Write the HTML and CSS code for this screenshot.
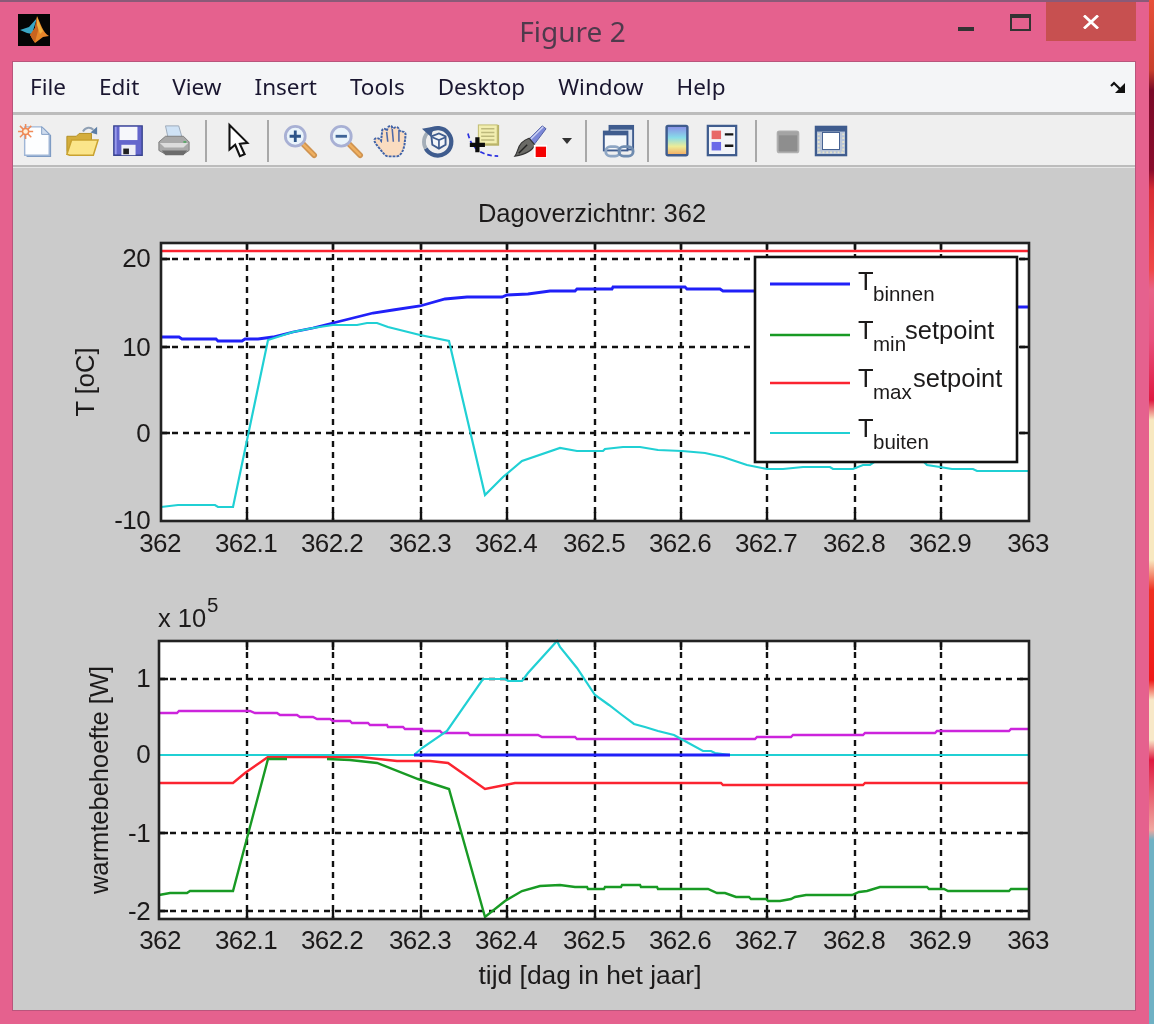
FILE: index.html
```html
<!DOCTYPE html>
<html lang="nl">
<head>
<meta charset="utf-8">
<title>Figure 2</title>
<link rel="stylesheet" href="styles.css">
</head>
<body>
<div class="window">
  <header class="titlebar">
    <div class="title-left">
      <svg class="app-icon" viewBox="0 0 32 32">
        <rect width="32" height="32" fill="#050505"/>
        <path d="M2 16 L11 13 L19 4 L14 20 L9 19Z" fill="#3aa6c4"/>
        <path d="M19 2 C22 8 25 19 31 22 L25 23 L17 29 C14 25 13 22 12 21 L17 14Z" fill="#e8872a"/>
        <path d="M19 3 L21 13 L17 28 C14 25 13 22 12 21 L17 14Z" fill="#c9641f"/>
        <path d="M19 3 C21 8 23 14 25 17 L22 20 L19 11Z" fill="#f0b040"/>
      </svg>
    </div>
    <div class="title-text">Figure 2</div>
    <div class="caption">
      <span class="cap-btn cap-min"><i class="min-bar"></i></span>
      <span class="cap-btn cap-max"><i class="max-box"></i></span>
      <span class="cap-btn cap-close">
        <svg viewBox="0 0 16 14" class="close-x"><path d="M1 0.5 L15 13.5 M15 0.5 L1 13.5" /></svg>
      </span>
    </div>
  </header>

  <main class="client">
    <nav class="menubar">
      <span class="menu-item">File</span>
      <span class="menu-item">Edit</span>
      <span class="menu-item">View</span>
      <span class="menu-item">Insert</span>
      <span class="menu-item">Tools</span>
      <span class="menu-item">Desktop</span>
      <span class="menu-item">Window</span>
      <span class="menu-item">Help</span>
      <svg class="dock-arrow" viewBox="0 0 16 14">
        <path d="M1 5 L4 2 L10 8" fill="none" stroke="#111" stroke-width="2.2"/>
        <path d="M15 2 V12 H5Z" fill="#111"/>
      </svg>
    </nav>

    <div class="toolbar">
      <span class="tb">
        <svg viewBox="0 0 36 36" class="ico">
          <path d="M8 4 H26 L34 12 V35 H8Z" fill="#7f9cc4"/>
          <path d="M6 3 H24 L32 11 V33 H6Z" fill="#fdfeff" stroke="#9fb6d6" stroke-width="1.5"/>
          <path d="M24 3 V11 H32Z" fill="#cfdcee" stroke="#7f9cc4"/>
          <circle cx="7" cy="8" r="4" fill="#f08a50"/>
          <path d="M7 0 V16 M-1 8 H15 M1 2 L13 14 M13 2 L1 14" stroke="#ef8a58" stroke-width="1.6"/>
          <circle cx="7" cy="8" r="2.4" fill="#fff0d8"/>
        </svg>
      </span>
      <span class="tb">
        <svg viewBox="0 0 36 36" class="ico">
          <path d="M2 13 H12 L15 10 H28 V33 H6 C4 33 2 32 2 29Z" fill="#d4ad3c" stroke="#b08c20"/>
          <path d="M2 32 L7 17 H35 L30 33 H5Z" fill="#fbe58a" stroke="#c9a230" stroke-width="1.6"/>
          <path d="M19 8 C22 3 27 3 30 6" fill="none" stroke="#8fa0b4" stroke-width="2.2"/>
          <path d="M34 3 L34 11 L27 9Z" fill="#5c7ea6"/>
        </svg>
      </span>
      <span class="tb">
        <svg viewBox="0 0 36 36" class="ico">
          <path d="M3 2 H33 V33 H3Z" fill="#6466cc" stroke="#3a4590" stroke-width="1.5"/>
          <path d="M5 3 L5 32" stroke="#9a9cec" stroke-width="2"/>
          <rect x="9" y="3" width="19" height="14" fill="#f6f7fb"/>
          <rect x="11" y="22" width="15" height="11" fill="#eeeef6"/>
          <rect x="13" y="26" width="6" height="6" fill="#222"/>
        </svg>
      </span>
      <span class="tb">
        <svg viewBox="0 0 36 36" class="ico">
          <path d="M9 2 H23 L27 16 H12Z" fill="#cfe2f5" stroke="#9aa8b8"/>
          <path d="M2 19 L9 13 H28 L34 19 V28 L28 32 H9 L2 28Z" fill="#a9a9a9" stroke="#7c7c7c"/>
          <path d="M3 20 H33 L28 25 H8Z" fill="#dcdcdc"/>
          <path d="M5 28 H32 L28 33 H9Z" fill="#6c6c6c"/>
          <path d="M28 19 H31" stroke="#5aa868" stroke-width="2"/>
        </svg>
      </span>
      <i class="sep sep-a"></i>
      <span class="tb">
        <svg viewBox="0 0 36 36" class="ico">
          <path d="M9 1 V27 L15 22 L20 34 L25 32 L20 21 L28 20Z" fill="#fff" stroke="#111" stroke-width="2.2" stroke-linejoin="miter"/>
        </svg>
      </span>
      <i class="sep"></i>
      <span class="tb">
        <svg viewBox="0 0 36 36" class="ico">
          <path d="M21 21 L33 33" stroke="#cf9350" stroke-width="6" stroke-linecap="round"/>
          <path d="M21 21 L33 33" stroke="#efb060" stroke-width="2.5" stroke-linecap="round"/>
          <circle cx="13" cy="13" r="10.5" fill="#eaf4fb" stroke="#a8b0d4" stroke-width="3"/>
          <path d="M7 13 H19 M13 7 V19" stroke="#2e5488" stroke-width="3"/>
        </svg>
      </span>
      <span class="tb">
        <svg viewBox="0 0 36 36" class="ico">
          <path d="M21 21 L33 33" stroke="#cf9350" stroke-width="6" stroke-linecap="round"/>
          <path d="M21 21 L33 33" stroke="#efb060" stroke-width="2.5" stroke-linecap="round"/>
          <circle cx="13" cy="13" r="10.5" fill="#eaf4fb" stroke="#a8b0d4" stroke-width="3"/>
          <path d="M7 13 H19" stroke="#3e6498" stroke-width="3"/>
        </svg>
      </span>
      <span class="tb">
        <svg viewBox="0 0 36 36" class="ico">
          <g transform="translate(-3 -1) scale(1.18 1.04)">
            <path d="M2 17 C3 14 6 15 8 18 L9 8 C9 5 12 5 13 8 L14 5 C15 2 18 2 18 5 L20 5 C21 3 24 4 24 7 L26 9 C28 8 30 9 30 12 L29 22 C28 28 26 33 22 34 H14 C11 33 9 29 6 25 C4 22 2 20 2 17Z" fill="#fadcc0" stroke="#3f62a8" stroke-width="1.8" stroke-dasharray="2.5 1"/>
            <path d="M13 9 L14 19 M18 6 L19 19 M24 8 L24 19" stroke="#4f6aa8" stroke-width="1.4"/>
          </g>
        </svg>
      </span>
      <span class="tb">
        <svg viewBox="0 0 36 36" class="ico">
          <path d="M8 8 A14.5 14.5 0 1 1 5 26" fill="none" stroke="#3f5c8e" stroke-width="4.5"/>
          <path d="M8 8 A14.5 14.5 0 0 0 5 26" fill="none" stroke="#a4aeb8" stroke-width="4"/>
          <path d="M1 5 L13 3 L11 14Z" fill="#3f5c8e"/>
          <path d="M11 13 L19 10 L26 13 V22 L19 26 L12 22Z" fill="#f2f5f9" stroke="#3f5c8e" stroke-width="2"/>
          <path d="M12 14 L19 17 L26 14 M19 17 V26" fill="none" stroke="#3f5c8e" stroke-width="1.8"/>
        </svg>
      </span>
      <span class="tb">
        <svg viewBox="0 0 36 36" class="ico">
          <path d="M1 10 C3 18 6 24 12 28 C18 32 25 34 33 34" fill="none" stroke="#2a30e0" stroke-width="1.8" stroke-dasharray="5 3"/>
          <rect x="12" y="1" width="22" height="22" fill="#b8b268"/>
          <rect x="12" y="1" width="20" height="20" fill="#f2eeb0" stroke="#c0bb70"/>
          <path d="M15 5 H29 M15 9 H29 M15 13 H29 M15 17 H29" stroke="#bdb97c" stroke-width="1.6"/>
          <path d="M3 22 H19 M11 14 V30" stroke="#0c0c0c" stroke-width="4.5"/>
        </svg>
      </span>
      <span class="tb">
        <svg viewBox="0 0 36 36" class="ico">
          <path d="M17 16 L31 2 L35 5 L23 21Z" fill="#7c88d8" stroke="#4c5aa0"/>
          <path d="M19 16 L32 3" stroke="#cdd4f4" stroke-width="1.5"/>
          <path d="M17 15 L23 22 C21 28 14 32 2 34 C5 30 5 24 9 20 C11 18 14 16 17 15Z" fill="#6a6a66" stroke="#333" stroke-width="1.2"/>
          <path d="M6 31 L15 22" stroke="#222" stroke-width="1.5"/>
          <rect x="22" y="22" width="14" height="14" fill="#fff"/>
          <rect x="24" y="24" width="11" height="11" fill="#f40000"/>
        </svg>
      </span>
      <span class="caret-cell"><i class="caret"></i></span>
      <i class="sep sep-b"></i>
      <span class="tb">
        <svg viewBox="0 0 36 36" class="ico">
          <rect x="9" y="2" width="25" height="25" fill="#dde5f0" stroke="#3f5c8e" stroke-width="2"/>
          <rect x="9" y="2" width="25" height="4" fill="#3f5c8e"/>
          <rect x="3" y="8" width="25" height="20" fill="#f5f7fa" stroke="#3f5c8e" stroke-width="2"/>
          <rect x="3" y="8" width="25" height="4" fill="#3f5c8e"/>
          <rect x="5" y="24" width="15" height="10" rx="5" fill="none" stroke="#8ea6c4" stroke-width="3"/>
          <rect x="19" y="24" width="15" height="10" rx="5" fill="none" stroke="#6f8cb0" stroke-width="3"/>
        </svg>
      </span>
      <i class="sep"></i>
      <span class="tb tb-narrow">
        <svg viewBox="0 0 36 36" class="ico">
          <defs>
            <linearGradient id="cbar" x1="0" y1="0" x2="0" y2="1">
              <stop offset="0" stop-color="#8a8ce8"/>
              <stop offset=".4" stop-color="#88dce8"/>
              <stop offset=".7" stop-color="#ecec98"/>
              <stop offset="1" stop-color="#f4a860"/>
            </linearGradient>
          </defs>
          <rect x="7" y="2" width="22" height="31" rx="1.5" fill="url(#cbar)" stroke="#3f5c8e" stroke-width="2.6"/>
        </svg>
      </span>
      <span class="tb tb-wide">
        <svg viewBox="0 0 36 36" class="ico">
          <rect x="3" y="2" width="30" height="31" fill="#f2f4f8" stroke="#3f5c8e" stroke-width="2.4"/>
          <rect x="7" y="7" width="10" height="9" fill="#e86868"/>
          <rect x="7" y="19" width="10" height="9" fill="#6a6ae8"/>
          <path d="M21 11 H30 M21 23 H30" stroke="#151515" stroke-width="2.6"/>
        </svg>
      </span>
      <i class="sep sep-a"></i>
      <span class="tb">
        <svg viewBox="0 0 36 36" class="ico">
          <rect x="7" y="8" width="22" height="22" rx="2" fill="#8e8e8e" stroke="#b0b0b0" stroke-width="2"/>
          <rect x="7" y="8" width="22" height="4" fill="#a4a4a4"/>
        </svg>
      </span>
      <span class="tb tb-narrow">
        <svg viewBox="0 0 36 36" class="ico">
          <rect x="2" y="3" width="32" height="30" fill="#b8c4d8" stroke="#3f5c8e" stroke-width="2.4"/>
          <rect x="2" y="3" width="32" height="5" fill="#3f5c8e"/>
          <rect x="9" y="9" width="18" height="18" fill="#fff" stroke="#3f5c8e" stroke-width="1"/>
          <path d="M5 10 V31 M31 10 V31 M5 30 H31" stroke="#e8e4c8" stroke-width="2" stroke-dasharray="2 2"/>
        </svg>
      </span>
    </div>

    <svg class="figure" viewBox="13 168 1122 842" role="img" aria-label="Dagoverzichtnr: 362">
      <text class="t c" x="592" y="222">Dagoverzichtnr: 362</text>

      <!-- Axes 1 -->
      <rect class="axes-bg" x="161" y="243" width="868" height="278"/>
      <path class="grid" d="M247 243V521M333 243V521M421 243V521M507 243V521M595 243V521M681 243V521M767 243V521M855 243V521M941 243V521M161 259H1029M161 347H1029M161 433H1029"/>
      <path class="tick" d="M247 243v9M333 243v9M421 243v9M507 243v9M595 243v9M681 243v9M767 243v9M855 243v9M941 243v9M247 521v-9M333 521v-9M421 521v-9M507 521v-9M595 521v-9M681 521v-9M767 521v-9M855 521v-9M941 521v-9M161 259h9M161 347h9M161 433h9M1029 259h-9M1029 347h-9M1029 433h-9"/>
      <polyline class="ln red" points="161,251 1029,251"/>
      <polyline class="ln blue" points="161,337 179,337 182,339 216,339 218,341 242,341 245,339 258,339 273,337 293,332 313,328 333,323 353,318 373,313 393,310 420,306 445,299 467,297 502,297 507,295 528,294 550,291 575,291 577,289 612,289 613,287 685,287 687,289 720,289 723,291 755,291 840,300 1017,307 1029,307"/>
      <polyline class="ln cyan" points="161,507 178,505 215,505 218,507 233,507 268,340 293,332 313,328 333,325 357,325 367,323 377,323 388,327 420,335 449,341 485,495 503,477 522,461 560,448 577,451 603,451 605,449 623,447 640,447 658,450 682,451 705,453 723,457 747,465 767,469 783,469 803,467 830,467 833,469 853,469 863,465 870,465 880,458 920,458 927,465 940,467 952,469 973,469 977,471 1029,471"/>
      <rect class="frame" x="161" y="243" width="868" height="278"/>

      <text class="t tk c" x="161" y="552">362</text>
      <text class="t tk c" x="247" y="552">362.1</text>
      <text class="t tk c" x="333" y="552">362.2</text>
      <text class="t tk c" x="421" y="552">362.3</text>
      <text class="t tk c" x="507" y="552">362.4</text>
      <text class="t tk c" x="595" y="552">362.5</text>
      <text class="t tk c" x="681" y="552">362.6</text>
      <text class="t tk c" x="767" y="552">362.7</text>
      <text class="t tk c" x="855" y="552">362.8</text>
      <text class="t tk c" x="941" y="552">362.9</text>
      <text class="t tk c" x="1029" y="552">363</text>
      <text class="t tk r" x="151" y="267">20</text>
      <text class="t tk r" x="151" y="356">10</text>
      <text class="t tk r" x="151" y="442">0</text>
      <text class="t tk r" x="151" y="529">-10</text>
      <text class="t c" transform="translate(94 382) rotate(-90)">T [oC]</text>

      <!-- Legend -->
      <rect class="legend" x="755" y="257" width="262" height="205"/>
      <path class="ln blue" d="M770 284H850"/>
      <path class="ln green" d="M770 335H850"/>
      <path class="ln red" d="M770 383H850"/>
      <path class="ln cyan" d="M770 433H850"/>
      <text class="t" x="858" y="290">T<tspan class="sub" x="873" y="301">binnen</tspan></text>
      <text class="t" x="858" y="339">T<tspan class="sub" x="873" y="351">min</tspan><tspan x="905" y="339">setpoint</tspan></text>
      <text class="t" x="858" y="387">T<tspan class="sub" x="873" y="399">max</tspan><tspan x="913" y="387">setpoint</tspan></text>
      <text class="t" x="858" y="437">T<tspan class="sub" x="873" y="449">buiten</tspan></text>

      <!-- Axes 2 -->
      <rect class="axes-bg" x="159" y="641" width="870" height="278"/>
      <path class="grid" d="M247 641V919M333 641V919M421 641V919M507 641V919M595 641V919M681 641V919M767 641V919M855 641V919M941 641V919M159 679H1029M159 833H1029M159 911H1029"/>
      <path class="tick" d="M247 641v9M333 641v9M421 641v9M507 641v9M595 641v9M681 641v9M767 641v9M855 641v9M941 641v9M247 919v-9M333 919v-9M421 919v-9M507 919v-9M595 919v-9M681 919v-9M767 919v-9M855 919v-9M941 919v-9M159 679h9M159 833h9M159 911h9M1029 679h-9M1029 833h-9M1029 911h-9"/>
      <polyline class="ln magenta" points="159,713 177,713 179,711 250,711 255,713 277,713 280,715 297,715 300,717 313,717 317,719 330,719 333,721 350,721 352,723 368,723 370,725 387,725 388,727 403,727 405,729 422,729 423,731 440,731 442,733 468,733 470,735 538,735 542,737 575,737 577,739 755,739 757,737 791,737 793,735 863,735 865,733 935,733 937,731 1009,731 1011,729 1029,729"/>
      <polyline class="ln cyan" points="159,755 414,755 422,748 447,731 483,679 505,679 508,681 522,681 528,673 557,641 560,647 577,668 595,695 609,705 622,715 634,724 645,727 658,731 674,735 683,740 703,751 711,751 715,753 730,755 1029,755"/>
      <polyline class="ln blue" points="414,755 730,755"/>
      <polyline class="ln red" points="159,783 233,783 245,773 268,757 360,757 397,761 430,761 448,763 485,789 505,785 515,783 721,783 723,785 863,785 865,783 1029,783"/>
      <polyline class="ln green" points="159,895 170,893 187,893 190,891 233,891 268,759 287,759"/>
      <polyline class="ln green" points="327,759 350,760 377,763 418,779 449,789 485,917 505,901 522,891 540,886 560,885 575,887 587,887 588,889 604,889 605,887 621,887 622,885 640,885 641,887 657,887 658,889 708,889 717,893 725,893 736,897 749,897 751,899 766,899 768,901 780,901 791,899 795,897 806,895 852,895 859,892 867,891 880,887 927,887 929,889 944,889 948,891 1009,891 1011,889 1029,889"/>
      <polyline class="ln cyan" points="159,755 414,755"/>
      <rect class="frame" x="159" y="641" width="870" height="278"/>

      <text class="t tk c" x="161" y="949">362</text>
      <text class="t tk c" x="247" y="949">362.1</text>
      <text class="t tk c" x="333" y="949">362.2</text>
      <text class="t tk c" x="421" y="949">362.3</text>
      <text class="t tk c" x="507" y="949">362.4</text>
      <text class="t tk c" x="595" y="949">362.5</text>
      <text class="t tk c" x="681" y="949">362.6</text>
      <text class="t tk c" x="767" y="949">362.7</text>
      <text class="t tk c" x="855" y="949">362.8</text>
      <text class="t tk c" x="941" y="949">362.9</text>
      <text class="t tk c" x="1029" y="949">363</text>
      <text class="t tk r" x="151" y="687">1</text>
      <text class="t tk r" x="151" y="763">0</text>
      <text class="t tk r" x="151" y="842">-1</text>
      <text class="t tk r" x="151" y="920">-2</text>
      <text class="t" x="158" y="627">x 10</text>
      <text class="t sub" x="207" y="612">5</text>
      <text class="t c" transform="translate(108 780) rotate(-90)">warmtebehoefte [W]</text>
      <text class="t c xlabel" x="590" y="984">tijd [dag in het jaar]</text>
    </svg>
  </main>
</div>
</body>
</html>
```

FILE: styles.css
```css
* { box-sizing: border-box; }

html, body { margin: 0; height: 100%; }

body {
  width: 1154px;
  height: 1024px;
  overflow: hidden;
  background: linear-gradient(to bottom,
    #e8503a 0, #c8402c 70px, #7a0a28 90px, #8a0c2c 170px, #d82c34 190px,
    #f04848 270px, #e86488 290px, #e8507c 340px, #e01840 400px,
    #f8e8c0 420px, #f8e8c0 560px, #f03020 590px, #f01818 680px,
    #f8e8c8 700px, #f8e8c8 740px, #e01840 760px, #f0a8a0 830px,
    #6fb1c4 840px, #6fb1c4 1024px);
}

.window {
  width: 1149px;
  height: 1024px;
  display: flex;
  flex-direction: column;
  padding: 0 14px 14px 13px;
  background: #e5618e;
  border-top: 2px solid #8a5a78;
  filter: blur(.7px);
}

.titlebar {
  height: 60px;
  margin: 0 -14px 0 -13px;
  display: grid;
  grid-template-columns: 1fr auto 1fr;
  flex: none;
}

.title-left { padding: 12px 0 0 18px; }

.app-icon { display: block; width: 32px; height: 32px; }

.title-text {
  padding: 11px 4px 0 0;
  font: 28px/36px "Noto Sans", sans-serif;
  color: #4f3a4c;
}

.caption { display: flex; justify-content: flex-end; padding-right: 13px; }

.cap-btn { display: flex; }

.cap-min { width: 52px; padding: 25px 0 0 0; }
.min-bar { display: block; width: 16px; height: 4px; background: #333; }

.cap-max { width: 36px; padding: 12px 0 0 0; }
.max-box {
  display: block;
  width: 21px;
  height: 17px;
  border: 2px solid #333;
  border-top-width: 4px;
}

.cap-close {
  width: 90px;
  height: 39px;
  background: #c75050;
  align-items: center;
  justify-content: center;
}

.close-x { width: 16px; height: 14px; }
.close-x path { stroke: #fff; stroke-width: 2.8; fill: none; }

.client {
  flex: 1;
  min-height: 0;
  display: flex;
  flex-direction: column;
  background: #cbcbcb;
  outline: 1px solid #b9557c;
}

.menubar {
  height: 50px;
  flex: none;
  display: flex;
  align-items: center;
  gap: 33px;
  padding: 1px 9px 0 17px;
  background: #f4f5f7;
  font: 22.5px/1 "Noto Sans", sans-serif;
  color: #1a1630;
}

.dock-arrow { width: 16px; height: 14px; margin-left: auto; }

.toolbar {
  height: 56px;
  flex: none;
  display: flex;
  align-items: center;
  background: #efefef;
  border-top: 3px solid #bcbcbc;
  border-bottom: 1px solid #e6e6e6;
  box-shadow: inset 0 -2px 0 #bcbcbc;
}

.tb {
  width: 46px;
  height: 36px;
  flex: none;
  display: flex;
  align-items: center;
  justify-content: center;
}

.tb-narrow { width: 40px; }
.tb-wide { width: 50px; }

.ico { width: 34px; height: 34px; overflow: visible; }

.sep {
  width: 2px;
  height: 42px;
  flex: none;
  margin: 0 8px 0 6px;
  background: #a8a8a8;
}

.sep-a { margin-left: 8px; }
.sep-b { margin-left: 4px; }

.caret-cell {
  width: 28px;
  flex: none;
  display: flex;
  justify-content: center;
}

.caret {
  width: 0;
  height: 0;
  border-left: 5px solid transparent;
  border-right: 5px solid transparent;
  border-top: 6px solid #333;
}

.figure { display: block; width: 1122px; height: 842px; flex: none; }

.axes-bg { fill: #fff; }

.frame { fill: none; stroke: #222; stroke-width: 2.6; }

.grid { fill: none; stroke: #111; stroke-width: 2.4; stroke-dasharray: 6 5; }

.tick { fill: none; stroke: #111; stroke-width: 2.4; }

.ln { fill: none; stroke-width: 2.4; }

.blue { stroke: #2020f8; stroke-width: 2.8; }
.green { stroke: #189a24; }
.red { stroke: #fb2430; }
.cyan { stroke: #20d0d4; stroke-width: 2.2; }
.magenta { stroke: #cc24dc; }

.legend { fill: #fff; stroke: #111; stroke-width: 2.6; }

.t { font-family: "Liberation Sans", Arial, sans-serif; font-size: 25.5px; fill: #1c1a1a; }
.tk { font-size: 26px; letter-spacing: -.6px; transform: translateX(-1px); }
.xlabel { font-size: 26.4px; }
.c { text-anchor: middle; }
.r { text-anchor: end; }
.sub { font-size: 20.5px; }
```
